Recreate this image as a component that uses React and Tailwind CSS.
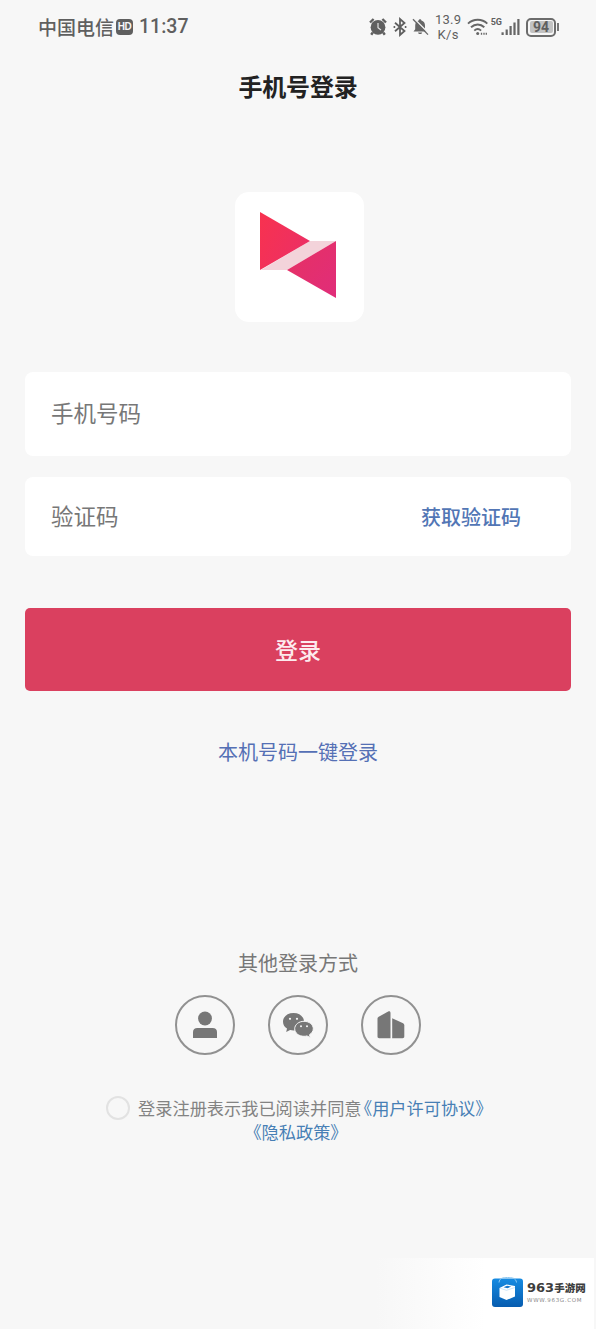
import React from "react";

const AlarmIcon = () => (
  <svg width="18" height="18" viewBox="0 0 18 18" fill="#5f5f5f">
    <circle cx="9" cy="9.3" r="7.4" />
    <path d="M1 4.5 4.6 1M17 4.5 13.4 1M3.8 14.5 2.2 16.8M14.2 14.5l1.6 2.3" stroke="#5f5f5f" strokeWidth="2.4" />
    <path d="M9 5v4.8l3 2.2" fill="none" stroke="#e0e0e0" strokeWidth="1.2" />
  </svg>
);

const BluetoothIcon = () => (
  <svg width="14" height="20" viewBox="0 0 14 20" fill="none" stroke="#5f5f5f" strokeWidth="1.8">
    <path d="M2 5.8 11.5 14 7 18V2l4.5 4L2 14.2" />
    <path d="M.6 10h1.6M11.8 10h1.6" />
  </svg>
);

const MutedIcon = () => (
  <svg width="17" height="18" viewBox="0 0 17 18">
    <path
      d="M8 1.2c.9 0 1.4.6 1.4 1.4C11.700 3.200 13 5.100 13 7.500v3.700l1.800 2.300H1.500l1.700-2.300V7.500c0-2.400 1.300-4.300 3.500-4.900 0-.8.5-1.400 1.300-1.400zM6 14.500h4.200c-.3 1-1 1.600-2.100 1.600S6.300 15.500 6 14.500z"
      fill="#666"
    />
    <path d="M2.300.8 17 15.500" stroke="#f7f7f7" strokeWidth="1.300" />
    <path d="M1 1.200 16 16.600" stroke="#666" strokeWidth="1.300" />
  </svg>
);

const WifiIcon = () => (
  <svg width="22" height="18" viewBox="0 0 22 18" fill="none" stroke="#666" strokeWidth="1.900">
    <path d="M1 5.600C6.500.5 15 .5 20.300 5.600M4 9.300c4-3.700 9.500-3.700 13.300 0M7.300 12.600c2.100-1.900 4.700-1.900 6.800 0" />
    <circle cx="10.700" cy="15.500" r="1.500" fill="#666" stroke="none" />
    <path d="M14.500 14.700v2M17 14.700v2M19.300 14.700v2" strokeWidth="1.300" />
  </svg>
);

const SignalIcon = () => (
  <svg width="20" height="18" viewBox="0 0 20 18" fill="#666">
    <rect x="0.500" y="14.300" width="2.200" height="2.700" />
    <rect x="4.600" y="11.500" width="2.200" height="5.500" />
    <rect x="8.500" y="8" width="2.200" height="9" />
    <rect x="12.400" y="4.500" width="2.200" height="12.500" />
    <rect x="16.300" y="1" width="2.200" height="16" />
  </svg>
);

const StatusBar = () => (
  <div className="flex h-[54px] items-center justify-between pl-[38px] pr-[37px] text-[#5f5f5f]">
    <div className="flex items-center">
      <span className="mb-[2px] text-[19px] font-medium leading-none">中国电信</span>
      <span className="ml-[2px] flex h-[16px] w-[17px] items-center justify-center rounded-[4px] bg-[#5f5f5f] font-['Liberation_Sans'] text-[10px] font-bold leading-none tracking-[-0.5px] text-[#f7f7f7]">
        HD
      </span>
      <span className="ml-[6px] font-[Roboto] text-[19.5px] font-medium leading-none">11:37</span>
    </div>
    <div className="flex items-center">
      <AlarmIcon />
      <span className="ml-[6px]">
        <BluetoothIcon />
      </span>
      <span className="ml-[5px]">
        <MutedIcon />
      </span>
      <div className="ml-[5px] w-[29px] text-center font-[Roboto] text-[13px] leading-[15px] tracking-[0.3px]">
        <div>13.9</div>
        <div>K/s</div>
      </div>
      <span className="ml-[4px]">
        <WifiIcon />
      </span>
      <span className="mb-[9px] ml-[2px] font-[Roboto] text-[9px] font-bold leading-none">5G</span>
      <span className="-ml-px">
        <SignalIcon />
      </span>
      <div className="ml-[5px] flex h-[19px] w-[30px] items-center justify-center rounded-[5px] border-2 border-[#6c6c6c] p-[1.5px]">
        <div className="flex h-full w-full items-center justify-center rounded-[2px] bg-[#c2c2c2] font-[Roboto] text-[14px] font-bold leading-none">
          94
        </div>
      </div>
      <div className="ml-px h-[8px] w-[2px] bg-[#777]" />
    </div>
  </div>
);

const AppLogo = () => (
  <div className="ml-[235px] h-[130px] w-[129px] rounded-[14px] bg-white pl-[24px] pt-[19px]">
    <svg width="78" height="88" viewBox="0 0 78 88">
      <defs>
        <linearGradient id="mark" x1="0" y1="0" x2="1" y2="0.500">
          <stop offset="0" stopColor="#f8324f" />
          <stop offset="1" stopColor="#ec2f64" />
        </linearGradient>
        <linearGradient id="markEnd" x1="0" y1="0" x2="1" y2="1">
          <stop offset="0" stopColor="#e73162" />
          <stop offset="1" stopColor="#e02d7a" />
        </linearGradient>
      </defs>
      <path d="M51 30h26L28 59H2z" fill="#f3d3da" />
      <path d="M1 1 51 30 1 59z" fill="url(#mark)" />
      <path d="M77 30v57L28 59z" fill="url(#markEnd)" />
    </svg>
  </div>
);

const LoginMethod = ({ label, children }) => (
  <button
    aria-label={label}
    className="flex h-[60px] w-[60px] items-center justify-center rounded-full border-2 border-[#919191]"
  >
    {children}
  </button>
);

const PersonIcon = () => (
  <svg width="26" height="28" viewBox="0 0 26 28" fill="#777">
    <circle cx="13" cy="7.500" r="6.900" />
    <path d="M1 27v-6c0-2.600 1.800-4 4.300-4h15.400c2.500 0 4.300 1.400 4.300 4v6z" />
  </svg>
);

const WechatIcon = () => (
  <svg width="32" height="26" viewBox="0 0 32 26" fill="#777">
    <path d="M11.500 1C5.500 1 1 4.700 1 9.700c0 2.900 1.500 5.300 4 6.900L4.200 20l3.900-2.100c1.100.3 2.200.5 3.400.5C17.500 18.400 22 14.700 22 9.700S17.500 1 11.500 1z" />
    <path
      d="M22 9.300c-5.200 0-9.300 3.300-9.300 7.500s4.100 7.500 9.300 7.500c1 0 2-.1 2.900-.4l3.400 1.700-.8-2.900c2.300-1.400 3.800-3.500 3.800-5.900 0-4.200-4.100-7.500-9.300-7.500z"
      stroke="#f7f7f7"
      strokeWidth="1"
    />
    <g fill="#f7f7f7">
      <circle cx="8" cy="6.800" r="1.100" />
      <circle cx="15" cy="6.800" r="1.100" />
      <circle cx="19" cy="14.300" r="1" />
      <circle cx="25" cy="14.300" r="1" />
    </g>
  </svg>
);

const CompanyIcon = () => (
  <svg width="28" height="28" viewBox="0 0 28 28" fill="#777">
    <path d="M.5 7.800c0-1 .4-1.600 1.200-2.100L11.200.6C12.500 0 13.500.5 13.500 2v25.300H2.200c-1 0-1.700-.7-1.700-1.700z" />
    <path d="M15.200 7.200 25.600 12c1.200.6 1.700 1.300 1.700 2.600v11c0 1-.7 1.700-1.700 1.700H15.200z" />
  </svg>
);

const SiteBadge = () => (
  <div className="mr-[2px] flex h-[71px] w-[218px] items-start justify-end bg-linear-to-r from-[#f7f7f7] to-white to-50% pr-[9px] pt-[19px]">
    <svg width="31" height="31" viewBox="0 0 31 31">
      <defs>
        <linearGradient id="bag" x1="0" y1="0" x2="0" y2="1">
          <stop offset="0" stopColor="#168be2" />
          <stop offset="1" stopColor="#075caf" />
        </linearGradient>
      </defs>
      <rect y="1.500" width="31" height="28.500" rx="3" fill="url(#bag)" />
      <path d="M7 5.500C7.500 1 11 .5 15.500.5S24 1 24.500 5.500" fill="none" stroke="#8ec8f2" strokeWidth="1" />
      <path d="m7.500 11 7-3.500 8.500 1.500v10.500l-8.500 3.500-7-3z" fill="#fff" />
      <path d="M8 11.200 14.500 13.300 23 10.500" fill="none" stroke="#a9d4f5" strokeWidth=".6" />
      <path d="m11.500 10.300 3.700-1.500 4 .8-3.800 1.700z" fill="#1677cc" />
    </svg>
    <div className="ml-[4px] mt-[4px] w-[58px]">
      <div className="flex items-center whitespace-nowrap leading-[14px] text-[#3e3e3e]">
        <span className="font-['DejaVu_Sans'] text-[13px] font-bold">963</span>
        <span className="text-[10.5px] font-black">手游网</span>
      </div>
      <div className="mt-[2px] whitespace-nowrap font-['DejaVu_Sans'] text-[5.5px] leading-[6px] tracking-[0.7px] text-[#888]">
        WWW.963G.COM
      </div>
    </div>
  </div>
);

const App = () => {
  return (
    <div className="flex h-[1329px] w-[596px] flex-col overflow-hidden bg-[#f7f7f7] font-['Noto_Sans_CJK_SC',sans-serif]">
      <StatusBar />

      <h1 className="mt-[15px] text-center text-[24px] font-bold leading-[34px] tracking-[-0.2px] text-[#222]">
        手机号登录
      </h1>

      <div className="mt-[89px]">
        <AppLogo />
      </div>

      {/* Login form */}
      <div className="mx-[25px] mt-[50px] flex flex-col text-[22.5px] text-[#777]">
        <div className="flex h-[84px] items-center rounded-[8px] bg-white pb-[2px] pl-[26px]">手机号码</div>
        <div className="mt-[21px] flex h-[79px] items-center justify-between rounded-[8px] bg-white pl-[26px] pr-[50px]">
          <span className="pb-px">验证码</span>
          <button className="text-[20px] font-medium text-[#5276b5]">获取验证码</button>
        </div>
        <button className="mt-[52px] flex h-[83px] items-center justify-center rounded-[5px] bg-[#da405f] pb-px text-[23px] font-medium text-[#fdebee]">
          登录
        </button>
      </div>

      <button className="mt-[46px] self-center text-[20px] leading-[30px] text-[#5570b5]">
        本机号码一键登录
      </button>

      {/* Other login methods */}
      <p className="mt-[181px] text-center text-[20px] leading-[30px] text-[#777]">其他登录方式</p>
      <div className="mt-[17px] flex justify-center gap-[33px]">
        <LoginMethod label="账号登录">
          <PersonIcon />
        </LoginMethod>
        <LoginMethod label="微信登录">
          <WechatIcon />
        </LoginMethod>
        <LoginMethod label="企业登录">
          <CompanyIcon />
        </LoginMethod>
      </div>

      {/* Agreement */}
      <div className="mt-[41px] text-[17.2px] leading-[24px] text-[#838383] [font-feature-settings:'halt']">
        <div className="flex items-center justify-center whitespace-nowrap pr-[6px]">
          <span className="mr-[8px] h-[24px] w-[24px] rounded-full border-2 border-[#e2e2e2]" />
          <span>登录注册表示我已阅读并同意</span>
          <span className="ml-[2px] text-[#477fb5]">《用户许可协议》</span>
        </div>
        <p className="pr-[4px] text-center text-[#477fb5]">《隐私政策》</p>
      </div>

      <div className="mt-auto flex justify-end">
        <SiteBadge />
      </div>
    </div>
  );
};

export default App;
